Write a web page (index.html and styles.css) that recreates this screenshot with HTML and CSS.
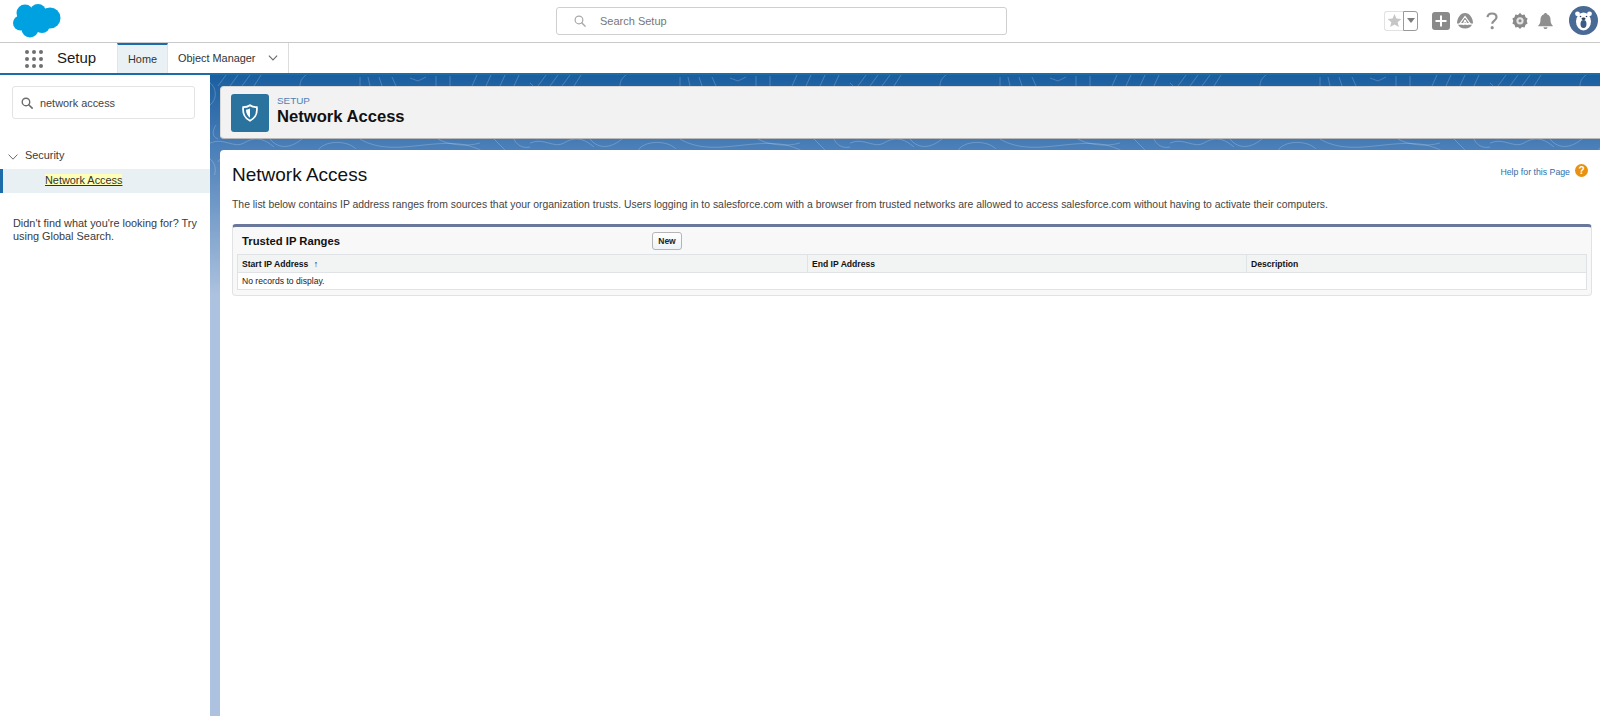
FILE: index.html
```html
<!DOCTYPE html>
<html lang="en">
<head>
    <meta charset="UTF-8">
    <title>Network Access | Salesforce</title>
    <link rel="stylesheet" href="styles.css">
</head>
<body>
    <!-- Top header -->
    <header class="top-bar">
        <div class="logo-slot">
            <svg width="50" height="36" viewBox="0 0 50 36" class="logo">
                <g fill="#00a1e0">
                    <circle cx="13" cy="10" r="8.500"/>
                    <circle cx="26" cy="9" r="8"/>
                    <circle cx="38" cy="15" r="10.500"/>
                    <circle cx="8.500" cy="20" r="7.500"/>
                    <circle cx="18" cy="26" r="8.500"/>
                    <circle cx="30" cy="22" r="8"/>
                    <rect x="10" y="10" width="28" height="14"/>
                </g>
            </svg>
        </div>
        <div class="global-search">
            <svg width="12" height="12" viewBox="0 0 14 14" class="search-icon">
                <circle cx="5.800" cy="5.800" r="4.500" fill="none" stroke="#a8a8a8" stroke-width="1.400"/>
                <path d="M9 9l4 4" stroke="#a8a8a8" stroke-width="1.600" stroke-linecap="round"/>
            </svg>
            <span>Search Setup</span>
        </div>
        <div class="header-icons">
            <div class="fav-group">
                <span class="fav-star">
                    <svg width="15" height="15" viewBox="0 0 16 16"><path d="M8 1l2.100 4.900 5.200.5-3.900 3.400 1.200 5.200L8 12.300 3.400 15l1.200-5.200L.7 6.400l5.200-.5z" fill="#c6c6c6"/></svg>
                </span>
                <span class="fav-drop"><svg width="8" height="5" viewBox="0 0 8 5"><path d="M0 0h8L4 5z" fill="#7d7d7d"/></svg></span>
            </div>
            <svg width="18" height="18" viewBox="0 0 18 18" class="icon-plus">
                <rect width="18" height="18" rx="3" fill="#8a8a8a"/>
                <path d="M9 3.500v11M3.500 9h11" stroke="#fff" stroke-width="2"/>
            </svg>
            <svg width="18" height="17" viewBox="0 0 18 17" class="icon-trail">
                <path d="M1 11.500C1 6 4.500 1 9 1s8 5 8 10.500z" fill="#8f8f8f"/>
                <path d="M2 12.800h14C15 15 12.500 16.500 9 16.500S3 15 2 12.800z" fill="#8f8f8f"/>
                <path d="M9 4.500L4 11.500h10zM9 8l-2 5M9 8l2.500 5" fill="none" stroke="#fff" stroke-width="1.200"/>
            </svg>
            <svg width="12" height="18" viewBox="0 0 12 18" class="icon-help">
                <path d="M1.500 5.200C1.700 2.800 3.500 1.500 6 1.500c2.600 0 4.500 1.400 4.500 3.700 0 3.300-4.300 3.300-4.300 6.500" fill="none" stroke="#8f8f8f" stroke-width="2.200"/>
                <circle cx="6.200" cy="15.700" r="1.600" fill="#8f8f8f"/>
            </svg>
            <svg width="16" height="17" viewBox="0 0 16 17" class="icon-gear">
                <path d="M8 .8l2 2.100 2.600-.5.900 2.800 2.100 1.300L14.700 9l.9 2.500-2.100 1.300-.9 2.800-2.600-.5-2 1.900-2-1.900-2.600.5-.9-2.800L.4 11.500 1.300 9 .4 6.500l2.100-1.300.9-2.800 2.600.5z" fill="#8a8a8a"/>
                <circle cx="8" cy="8.800" r="3.600" fill="#e4e4e4"/>
                <circle cx="8" cy="8.800" r="1.500" fill="#8a8a8a"/>
            </svg>
            <svg width="17" height="16" viewBox="0 0 16 16" class="icon-bell">
                <path d="M8 0c.9 0 1.500.6 1.500 1.300C11.800 2 13 4 13 6.500c0 3.500.8 4.800 2.200 6v.8H.8v-.8C2.200 11.300 3 10 3 6.500 3 4 4.200 2 6.500 1.300 6.500.6 7.100 0 8 0z" fill="#8f8f8f"/>
                <path d="M6 14.200h4c0 1-.9 1.800-2 1.800s-2-.8-2-1.800z" fill="#8f8f8f"/>
            </svg>
            <svg width="29" height="29" viewBox="0 0 29 29" class="avatar">
                <circle cx="14.500" cy="14.500" r="14.500" fill="#4a6a96"/>
                <circle cx="8.500" cy="7.800" r="2.400" fill="#fff"/>
                <circle cx="20.500" cy="7.800" r="2.400" fill="#fff"/>
                <ellipse cx="14.500" cy="15.500" rx="7.500" ry="9" fill="#fff"/>
                <circle cx="11.500" cy="10.500" r=".8" fill="#2f3f57"/>
                <circle cx="17.500" cy="10.500" r=".8" fill="#2f3f57"/>
                <ellipse cx="14.500" cy="12.800" rx="2" ry="1.200" fill="#2f3f57"/>
                <ellipse cx="14.500" cy="18" rx="3" ry="4" fill="#3e5a85"/>
            </svg>
        </div>
    </header>

    <!-- App nav -->
    <nav class="app-nav">
        <div class="waffle">
            <i></i><i></i><i></i><i></i><i></i><i></i><i></i><i></i><i></i>
        </div>
        <span class="app-name">Setup</span>
        <a class="tab tab-active">Home</a>
        <a class="tab tab-object">Object Manager
            <svg width="10" height="6" viewBox="0 0 11 7"><path d="M.7.8l4.800 5 4.800-5" fill="none" stroke="#6b6b6b" stroke-width="1.300"/></svg>
        </a>
    </nav>

    <div class="page">
        <!-- Left side tree -->
        <aside class="sidebar">
            <div class="quick-find">
                <svg width="12" height="12" viewBox="0 0 14 14">
                    <circle cx="5.800" cy="5.800" r="4.400" fill="none" stroke="#6b6b6b" stroke-width="1.600"/>
                    <path d="M9 9l4 4" stroke="#6b6b6b" stroke-width="1.800" stroke-linecap="round"/>
                </svg>
                <span>network access</span>
            </div>
            <div class="tree-parent">
                <svg width="10" height="6" viewBox="0 0 10 6"><path d="M.6.6L5 5.200 9.400.6" fill="none" stroke="#6b6b6b" stroke-width="1"/></svg>
                <span>Security</span>
            </div>
            <div class="tree-item"><mark>Network Access</mark></div>
            <p class="tree-help">Didn't find what you're looking for? Try using Global Search.</p>
        </aside>

        <main class="content">
            <svg class="contours" width="100%" height="100" fill="none" stroke="#fff" stroke-opacity=".2">
                <defs>
                    <pattern id="topo" width="320" height="76" patternUnits="userSpaceOnUse">
                        <path d="M8 11l8-11M20 11l8-11M32 11l8-11M44 11l7-11M90 11c0-5 2-8 6-11M150 11V2M160 11l-2-9M172 11l-3-9M186 11l-4-9M200 3l8 3 8-4M226 11V1M240 11V1M262 11l5-11M276 11l5-11M290 11l5-11M304 11l5-11"/>
                        <path d="M0 68c14-6 24 6 34 0s18-6 30 4M60 64c8 10 20 10 32 0M108 76c4-10 28-12 38-2M150 64c20 12 44 8 64 6s40-4 58 6M228 64c10 6 28 8 42 4M284 64l12 12M304 64c2 5 8 10 16 8"/>
                        <path d="M0 30c8-6 6-18 0-22M6 50c-4 6-4 12 2 14"/>
                    </pattern>
                </defs>
                <rect width="100%" height="100%" fill="url(#topo)" stroke="none"/>
            </svg>

            <section class="page-header">
                <div class="header-badge">
                    <svg width="18" height="18" viewBox="0 0 18 18">
                        <path d="M9 1.200c1.800 1.300 4.200 2 6.800 2C16.500 9 14 14.500 9 16.800 4 14.500 1.500 9 2.200 3.200c2.600 0 5-.7 6.800-2z" fill="none" stroke="#fff" stroke-width="1.800"/>
                        <path d="M9 4.500C7.900 5.200 6.500 5.600 5 5.700 5 9 6.500 12 9 13.700z" fill="#fff"/>
                    </svg>
                </div>
                <div class="header-text">
                    <div class="breadcrumb">SETUP</div>
                    <div class="header-title">Network Access</div>
                </div>
            </section>

            <section class="setup-panel">
                <div class="panel-top">
                    <h1>Network Access</h1>
                    <a class="help-link">Help for this Page
                        <span class="help-badge">?</span>
                    </a>
                </div>
                <p class="intro">The list below contains IP address ranges from sources that your organization trusts. Users logging in to salesforce.com with a browser from trusted networks are allowed to access salesforce.com without having to activate their computers.</p>

                <div class="related-list">
                    <div class="list-head">
                        <h3>Trusted IP Ranges</h3>
                        <button class="btn">New</button>
                    </div>
                    <table class="list-table">
                        <thead>
                            <tr>
                                <th class="col-start">Start IP Address <span class="sort-arrow">↑</span></th>
                                <th class="col-end">End IP Address</th>
                                <th>Description</th>
                            </tr>
                        </thead>
                        <tbody>
                            <tr><td colspan="3">No records to display.</td></tr>
                        </tbody>
                    </table>
                </div>
            </section>
        </main>
    </div>
</body>
</html>
```
FILE: styles.css
```css
html, body {
    height: 100%;
}

body {
    margin: 0;
    overflow: hidden;
    display: flex;
    flex-direction: column;
    font-family: "Liberation Sans", Arial, sans-serif;
    color: #333;
    background-color: #fff;
}

/* Top header */
.top-bar {
    flex: 0 0 43px;
    box-sizing: border-box;
    border-bottom: 1px solid #c9c9c9;
    display: flex;
    align-items: flex-start;
}

.logo-slot {
    width: 556px;
    flex-shrink: 0;
    padding: 3px 0 0 12px;
    box-sizing: border-box;
}

.logo {
    display: block;
}

.global-search {
    width: 451px;
    height: 28px;
    margin-top: 7px;
    box-sizing: border-box;
    border: 1px solid #cfcfcf;
    border-radius: 3px;
    display: flex;
    align-items: center;
    padding-left: 17px;
    font-size: 11px;
    color: #777;
}

.search-icon {
    margin-right: 14px;
}

.header-icons {
    margin-left: auto;
    display: flex;
    align-items: center;
    height: 29px;
    margin-top: 6px;
    padding-right: 2px;
}

.fav-group {
    display: flex;
    height: 20px;
    margin-right: 14px;
}

.fav-star {
    width: 19px;
    box-sizing: border-box;
    border: 1px solid #e2e2e2;
    border-right: 0;
    border-radius: 3px 0 0 3px;
    display: flex;
    align-items: center;
    justify-content: center;
}

.fav-drop {
    width: 15px;
    box-sizing: border-box;
    border: 1px solid #9a9a9a;
    border-radius: 0 3px 3px 0;
    display: flex;
    align-items: center;
    justify-content: center;
}

.icon-plus {
    margin-right: 6px;
}

.icon-trail {
    margin-right: 12px;
}

.icon-help {
    margin-right: 14px;
}

.icon-gear {
    margin-right: 9px;
}

.icon-bell {
    margin-right: 15px;
}

/* App nav */
.app-nav {
    flex: 0 0 32px;
    box-sizing: border-box;
    display: flex;
    align-items: stretch;
    border-bottom: 2px solid #1b6ca8;
}

.waffle {
    width: 18px;
    height: 18px;
    margin: 7px 14px 0 25px;
    display: grid;
    grid-template-columns: repeat(3, 4px);
    grid-auto-rows: 4px;
    gap: 3px;
}

.waffle i {
    background-color: #6f6f6f;
    border-radius: 50%;
}

.app-name {
    width: 60px;
    font-size: 15px;
    line-height: 30px;
    color: #1a1a1a;
}

.tab {
    font-size: 10.9px;
    line-height: 30px;
    color: #333;
    box-sizing: border-box;
}

.tab-active {
    width: 51px;
    text-align: center;
    background-color: #eaf1f4;
    border-top: 2px solid #1b6ca8;
    border-left: 1px solid #dfe5e8;
    border-right: 1px solid #dfe5e8;
    line-height: 28px;
}

.tab-object {
    width: 121px;
    padding-left: 10px;
    border-right: 1px solid #dddddd;
}

.tab-object svg {
    margin-left: 9px;
    vertical-align: 1px;
}

/* Page layout */
.page {
    flex: 1;
    min-height: 0;
    display: flex;
}

.sidebar {
    width: 210px;
    flex-shrink: 0;
    background-color: #fff;
    padding-top: 11px;
    box-sizing: border-box;
}

.quick-find {
    width: 183px;
    height: 33px;
    margin-left: 12px;
    box-sizing: border-box;
    border: 1px solid #e3e3e3;
    border-radius: 3px;
    display: flex;
    align-items: center;
    padding-left: 8px;
    font-size: 10.9px;
    color: #444;
}

.quick-find svg {
    margin-right: 7px;
}

.tree-parent {
    margin-top: 29px;
    padding-left: 8px;
    font-size: 10.9px;
    line-height: 14px;
    display: flex;
    align-items: center;
    color: #3a3a3a;
}

.tree-parent svg {
    margin: 3px 7px 0 0;
}

.tree-item {
    margin-top: 7px;
    height: 24px;
    line-height: 23px;
    box-sizing: border-box;
    padding-left: 42px;
    border-left: 3px solid #1b6ca8;
    background-color: #e9f0f3;
    font-size: 10.9px;
}

.tree-item mark {
    background-color: #ffffb8;
    color: #333;
    text-decoration: underline;
}

.tree-help {
    margin: 24px 0 0 13px;
    width: 192px;
    font-size: 10.9px;
    line-height: 13px;
    color: #3a3a3a;
}

/* Right content */
.content {
    position: relative;
    flex: 1;
    min-width: 0;
    display: flex;
    flex-direction: column;
    padding: 11px 0 0 10px;
    background: linear-gradient(to bottom, #1a5e9f 0, #4c80b9 75px, #adc2df 220px);
}

.contours {
    position: absolute;
    top: 0;
    left: 0;
}

.page-header {
    position: relative;
    flex: 0 0 53px;
    box-sizing: border-box;
    display: flex;
    align-items: center;
    padding-left: 10px;
    background-color: #f2f2f2;
    border: 1px solid #d8d8d8;
    border-bottom-color: #b9b9b9;
    border-right: 0;
    border-radius: 4px 0 0 4px;
}

.header-badge {
    width: 38px;
    height: 38px;
    margin-right: 8px;
    flex-shrink: 0;
    border-radius: 3px;
    background-color: #2a739f;
    display: flex;
    align-items: center;
    justify-content: center;
}

.header-text {
    padding-bottom: 4px;
}

.breadcrumb {
    font-size: 9.9px;
    line-height: 12px;
    color: #4f81b5;
}

.header-title {
    font-size: 16.6px;
    font-weight: bold;
    line-height: 20px;
    color: #111;
}

.setup-panel {
    position: relative;
    flex: 1;
    margin-top: 11px;
    background-color: #fff;
    border-radius: 4px 0 0 0;
    padding: 0 8px 0 12px;
}

.panel-top {
    display: flex;
    justify-content: space-between;
    align-items: flex-start;
    padding-top: 13px;
}

h1 {
    margin: 0;
    font-size: 19px;
    font-weight: normal;
    line-height: 24px;
    color: #111;
}

.help-link {
    font-size: 8.75px;
    color: #2f6ea8;
    display: flex;
    align-items: center;
    margin-top: 4px;
    margin-right: 4px;
}

.help-badge {
    width: 13px;
    height: 13px;
    margin: -3px 0 0 5px;
    border-radius: 50%;
    background-color: #e8920e;
    color: #fff;
    font-size: 10px;
    font-weight: bold;
    line-height: 13px;
    text-align: center;
}

.intro {
    margin: 11px 0 0;
    font-size: 10.4px;
    line-height: 14px;
    color: #444;
    white-space: nowrap;
}

.related-list {
    margin-top: 12px;
    height: 72px;
    box-sizing: border-box;
    padding: 0 4px;
    background-color: #f8f8f8;
    border: 1px solid #e0e3e5;
    border-top: 3px solid #69789a;
    border-radius: 4px;
}

.list-head {
    display: flex;
    align-items: center;
    height: 27px;
}

h3 {
    margin: 0 0 0 5px;
    width: 410px;
    font-size: 11.25px;
    font-weight: bold;
    color: #111;
}

.btn {
    width: 30px;
    height: 18px;
    padding: 0;
    font-family: inherit;
    font-size: 8.5px;
    font-weight: bold;
    color: #222;
    background: linear-gradient(to bottom, #fff, #edf3f8);
    border: 1px solid #b5b5b5;
    border-radius: 3px;
}

.list-table {
    width: 100%;
    table-layout: fixed;
    border-collapse: collapse;
    background-color: #fff;
    font-size: 8.6px;
    color: #222;
}

.list-table th,
.list-table td {
    height: 16px;
    padding: 0 4px;
    text-align: left;
    border: 1px solid #e0e3e5;
}

.list-table th {
    height: 17px;
    background-color: #f2f3f3;
    font-weight: bold;
    color: #111;
}

.col-start {
    width: 561px;
}

.col-end {
    width: 430px;
}

.sort-arrow {
    font-weight: normal;
    margin-left: 3px;
}
```
